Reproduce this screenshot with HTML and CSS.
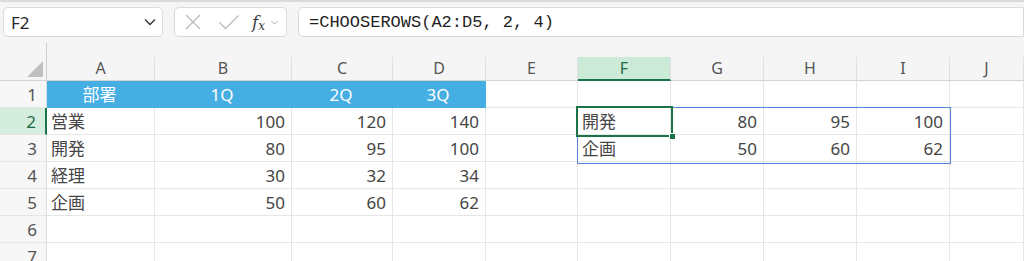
FILE: index.html
```html
<!DOCTYPE html>
<html lang="ja">

<head>
  <meta charset="UTF-8">
  <meta name="viewport" content="width=device-width, initial-scale=1.0">
  <title>CHOOSEROWS</title>
  <link rel="stylesheet" href="styles.css">
</head>

<body>
  <header class="toolbar">
    <div class="namebox">
      <span>F2</span>
      <svg class="chev" width="12" height="8" viewBox="0 0 12 8"><path d="M1 1.5 6 6.5 11 1.5" fill="none" stroke="#333" stroke-width="1.4"/></svg>
    </div>
    <div class="fxbox">
      <svg width="18" height="18" viewBox="0 0 18 18"><path d="M2 2 16 16M16 2 2 16" stroke="#bdbdbd" stroke-width="1.4"/></svg>
      <svg width="22" height="18" viewBox="0 0 22 18"><path d="M1.5 9.5 7.5 15.5 20.5 2.5" fill="none" stroke="#bdbdbd" stroke-width="1.4"/></svg>
      <span class="fx">f<sub>x</sub></span>
      <svg width="7" height="5" viewBox="0 0 7 5"><path d="M.5 1 3.5 4 6.5 1" fill="none" stroke="#aaa" stroke-width="1"/></svg>
    </div>
    <div class="formula">=CHOOSEROWS(A2:D5, 2, 4)</div>
  </header>

  <main class="sheet">
    <div class="corner"></div>
    <div class="ch">A</div><div class="ch">B</div><div class="ch">C</div><div class="ch">D</div><div class="ch">E</div>
    <div class="ch active">F</div><div class="ch">G</div><div class="ch">H</div><div class="ch">I</div><div class="ch">J</div>

    <div class="rh">1</div>
    <div class="c hd">部署</div><div class="c hd">1Q</div><div class="c hd">2Q</div><div class="c hd">3Q</div>
    <div class="c"></div><div class="c"></div><div class="c"></div><div class="c"></div><div class="c"></div><div class="c"></div>

    <div class="rh active">2</div>
    <div class="c">営業</div><div class="c n">100</div><div class="c n">120</div><div class="c n">140</div>
    <div class="c"></div><div class="c">開発</div><div class="c n">80</div><div class="c n">95</div><div class="c n">100</div><div class="c"></div>

    <div class="rh">3</div>
    <div class="c">開発</div><div class="c n">80</div><div class="c n">95</div><div class="c n">100</div>
    <div class="c"></div><div class="c">企画</div><div class="c n">50</div><div class="c n">60</div><div class="c n">62</div><div class="c"></div>

    <div class="rh">4</div>
    <div class="c">経理</div><div class="c n">30</div><div class="c n">32</div><div class="c n">34</div>
    <div class="c"></div><div class="c"></div><div class="c"></div><div class="c"></div><div class="c"></div><div class="c"></div>

    <div class="rh">5</div>
    <div class="c">企画</div><div class="c n">50</div><div class="c n">60</div><div class="c n">62</div>
    <div class="c"></div><div class="c"></div><div class="c"></div><div class="c"></div><div class="c"></div><div class="c"></div>

    <div class="rh">6</div>
    <div class="c"></div><div class="c"></div><div class="c"></div><div class="c"></div><div class="c"></div>
    <div class="c"></div><div class="c"></div><div class="c"></div><div class="c"></div><div class="c"></div>

    <div class="rh">7</div>
    <div class="c"></div><div class="c"></div><div class="c"></div><div class="c"></div><div class="c"></div>
    <div class="c"></div><div class="c"></div><div class="c"></div><div class="c"></div><div class="c"></div>

    <!-- spill range and active cell -->
    <div class="spill"></div>
    <div class="cursor"><span class="handle"></span></div>
  </main>
</body>

</html>
```

FILE: styles.css
```css
* {
  margin: 0;
  box-sizing: border-box;
}

body {
  block-size: 261px;
  overflow: hidden;
  background: hsl(0deg 0% 96%);
  border-top: 2px solid hsl(0deg 0% 86%);
  font-family: 'Noto Sans', 'Noto Sans CJK JP', sans-serif;
  color: hsl(0deg 0% 27%);
}

.toolbar {
  display: flex;
  align-items: center;
  gap: 11px;
  padding-block: 5px 0;
  padding-inline: 3px 0;
  block-size: 35px;
}

.toolbar > div {
  block-size: 30px;
  background: #fff;
  border: 1px solid hsl(0deg 0% 86%);
  border-radius: 5px;
  display: flex;
  align-items: center;
}

.namebox {
  inline-size: 160px;
  justify-content: space-between;
  padding-inline: 7px 6px;
  font-size: 17px;
  color: hsl(0deg 0% 15%);
}

.fxbox {
  inline-size: 113px;
  padding-inline: 9px 6px;
  gap: 0;
}

.fxbox svg:first-child {
  margin-inline-end: 16px;
}

.fx {
  margin-inline: 12px 6px;
  font-family: 'DejaVu Serif', serif;
  font-style: italic;
  font-size: 17px;
  color: hsl(0deg 0% 25%);
}

.fx sub {
  font-size: 12px;
  vertical-align: -2px;
}

.formula {
  flex: 1;
  padding-inline: 10px;
  font-family: 'Liberation Mono', monospace;
  font-size: 17px;
  color: hsl(0deg 0% 12%);
  border-radius: 5px 0 0 5px !important;
}

.sheet {
  position: relative;
  margin-block-start: 20px;
  display: grid;
  grid-template-columns: 47px 108px 137px 101px 93px 92px 93px 93px 93px 93px 1fr;
  grid-template-rows: 24px repeat(7, 27px);
}

.corner {
  position: relative;
  border-right: 1px solid hsl(0deg 0% 80%);
  border-bottom: 1px solid hsl(0deg 0% 83%);
}

.corner::before {
  content: '';
  position: absolute;
  inset-inline-end: -1px;
  inset-block-start: -14px;
  block-size: 14px;
  border-right: 1px solid hsl(0deg 0% 80%);
}

.corner::after {
  content: '';
  position: absolute;
  inset-inline-end: 3px;
  inset-block-end: 3px;
  border-style: solid;
  border-width: 0 0 16px 16px;
  border-color: transparent transparent hsl(0deg 0% 75%) transparent;
}

.ch {
  text-align: center;
  font-size: 16px;
  line-height: 23px;
  color: hsl(0deg 0% 33%);
  border-right: 1px solid hsl(0deg 0% 88%);
  border-bottom: 1px solid hsl(0deg 0% 83%);
}

.ch.active {
  background: hsl(144deg 42% 86%);
  color: hsl(150deg 60% 26%);
  border-bottom: 2px solid hsl(150deg 62% 28%);
}

.rh {
  background: hsl(0deg 0% 97%);
  text-align: right;
  padding-inline-end: 9px;
  font-size: 17px;
  line-height: 27px;
  color: hsl(0deg 0% 33%);
  border-right: 1px solid hsl(0deg 0% 86%);
  border-bottom: 1px solid hsl(0deg 0% 90%);
}

.rh.active {
  background: hsl(144deg 42% 88%);
  color: hsl(150deg 60% 26%);
  border-right: 2px solid hsl(150deg 62% 28%);
}

.c {
  background: #fff;
  padding-inline: 4px 6px;
  font-size: 17px;
  line-height: 27px;
  white-space: nowrap;
  border-right: 1px solid hsl(0deg 0% 90%);
  border-bottom: 1px solid hsl(0deg 0% 90%);
}

.c.n {
  text-align: right;
}

.c.hd {
  background: hsl(200deg 74% 58%);
  border-color: hsl(200deg 74% 58%);
  color: #fff;
  text-align: center;
}

.spill {
  position: absolute;
  inset-inline-start: 577px;
  inset-block-start: 50px;
  inline-size: 374px;
  block-size: 57px;
  border: 1px solid hsl(217deg 60% 58%);
}

.cursor {
  position: absolute;
  inset-inline-start: 576px;
  inset-block-start: 49px;
  inline-size: 97px;
  block-size: 31px;
  border: 2px solid hsl(150deg 62% 28%);
}

.handle {
  position: absolute;
  inset-inline-end: -5px;
  inset-block-end: -5px;
  inline-size: 7px;
  block-size: 7px;
  background: hsl(150deg 62% 28%);
  border: 1px solid #fff;
}
```
